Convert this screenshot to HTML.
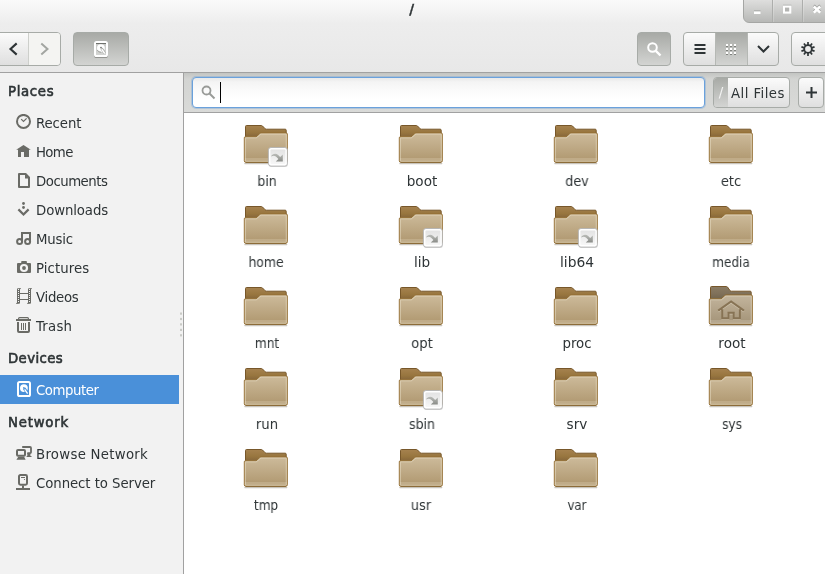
<!DOCTYPE html>
<html><head><meta charset="utf-8"><title>/</title>
<style>
*{box-sizing:border-box;margin:0;padding:0}
html,body{width:825px;height:574px;overflow:hidden;background:#ededed;font-family:"DejaVu Sans","Liberation Sans",sans-serif;font-size:13.3px;color:#2e3436}
#win{position:absolute;left:0;top:0;width:825px;height:574px;background:#ededed;overflow:hidden}
#titlebar{position:absolute;left:0;top:0;width:825px;height:24px;background:linear-gradient(#fafafa,#ededed)}
#title{position:absolute;left:0;width:823.6px;-webkit-text-stroke:.35px #2e3436;top:1px;text-align:center;font-weight:bold;font-size:13.3px;line-height:18px;color:#2e3436}
#wbtns{position:absolute;left:743px;top:-1px;width:90px;height:24px;border:1px solid #a5a6a4;border-bottom-left-radius:6px;background:linear-gradient(#dededd,#b7b8b6)}
#wbtns i{position:absolute;top:0;width:1px;height:22px;background:#adaeac;box-shadow:1px 0 0 rgba(255,255,255,.2)}
#toolbar{position:absolute;left:0;top:24px;width:825px;height:48px;background:linear-gradient(#ededed,#e8e8e8)}
#tbline{position:absolute;left:0;top:72px;width:825px;height:1px;background:#a1a1a1}
.btn{position:absolute;top:32px;height:34px;border:1px solid #a7aba7;border-radius:4px;background:linear-gradient(#fbfbfb,#dfdfdf)}
.btn.on{background:linear-gradient(#a8aaa6,#d3d4d2);border-color:#a7aba7}
#sidebar{position:absolute;left:0;top:73px;width:179px;height:501px;background:#f2f2f2}
#handle{position:absolute;left:179px;top:73px;width:4px;height:501px;background:#f2f2f2}
#handle i{position:absolute;left:1px;width:2px;height:2px;background:#cbccc8}
#sbline{position:absolute;left:183px;top:73px;width:1px;height:501px;background:#a1a1a1}
.hd{position:absolute;left:8px;font-weight:normal;-webkit-text-stroke:.6px #2e3436;font-size:13.3px;line-height:20px}
.it{position:absolute;left:36px;font-size:13.3px;line-height:20px}
.hd,.it,.af,.sl,#title,.l{will-change:transform}
.ic{position:absolute;left:16px;width:16px;height:16px}
#sel{position:absolute;left:0;top:302px;width:179px;height:29px;background:#4a90d9}
#search{position:absolute;left:184px;top:73px;width:641px;height:40px;background:linear-gradient(#c3c5c2,#d3d4d2 6px,#d9dad8);border-bottom:1px solid #a1a1a1}
#entry{position:absolute;left:8px;top:4px;width:513px;height:31px;border:1px solid #6aa1dc;border-radius:4px;background:linear-gradient(#e9e9e9,#f4f4f4 4px,#fafafa 12px,#fff 22px);box-shadow:0 0 0 1px rgba(74,144,217,.28)}
#view{position:absolute;left:184px;top:113px;width:641px;height:461px;background:#fff}
.f{position:absolute;width:48px;height:48px}
.l{position:absolute;width:120px;text-align:center;font-size:13.3px;line-height:18px}
.btn .dv{position:absolute;top:0;width:1px;height:32px;background:#b5b8b4}
.btn .mid{position:absolute;left:32px;top:0;width:31px;height:32px;background:linear-gradient(#a8aaa6,#d3d4d2)}
#cur{position:absolute;left:27px;top:4px;width:1px;height:21px;background:#000}
.sbtn{position:absolute;top:4px;height:31px;border:1px solid #a7aba7;border-radius:4px;background:linear-gradient(#fbfbfb,#dfdfdf);overflow:hidden}
.sbtn .sl{position:absolute;left:0;top:0;width:14px;height:29px;background:linear-gradient(#a8aaa6,#d3d4d2);color:#f4f4f4;font-weight:normal;font-size:13.3px;line-height:29px;text-align:center}
.sbtn .af{position:absolute;left:17px;top:1px;line-height:29px;font-size:13.3px;letter-spacing:.44px;white-space:nowrap}
</style></head><body>
<svg width="0" height="0" style="position:absolute"><defs>
<linearGradient id="gb" x1="0" y1="0" x2="0" y2="1"><stop offset="0" stop-color="#a6824f"/><stop offset="0.2" stop-color="#98763f"/><stop offset="0.33" stop-color="#86663a"/><stop offset="1" stop-color="#86663a"/></linearGradient>
<linearGradient id="gf" x1="0" y1="0" x2="0" y2="1"><stop offset="0" stop-color="#cdbb9b"/><stop offset="0.84" stop-color="#b39c75"/><stop offset="0.875" stop-color="#c2ae8b"/><stop offset="1" stop-color="#b9a480"/></linearGradient>
<linearGradient id="gbr" x1="0" y1="0" x2="0" y2="1"><stop offset="0" stop-color="#8b7b63"/><stop offset="0.2" stop-color="#80715a"/><stop offset="0.33" stop-color="#74664f"/><stop offset="1" stop-color="#74664f"/></linearGradient>
<linearGradient id="gfr" x1="0" y1="0" x2="0" y2="1"><stop offset="0" stop-color="#c3b59d"/><stop offset="0.84" stop-color="#a8987d"/><stop offset="0.875" stop-color="#b7a990"/><stop offset="1" stop-color="#ae9f85"/></linearGradient>
<linearGradient id="ge" x1="0" y1="0" x2="0" y2="1"><stop offset="0" stop-color="#e3e3e3"/><stop offset="1" stop-color="#f7f7f7"/></linearGradient>
<linearGradient id="ga" x1="0" y1="0" x2="0" y2="1"><stop offset="0" stop-color="#babcb8"/><stop offset="1" stop-color="#8a8c88"/></linearGradient>
<g id="fold">
<path d="M2.8 43.6 H44.8" stroke="#3a2a10" stroke-opacity=".28" stroke-width="1.2" stroke-linecap="round"/>
<path d="M3.5 40 V6.5 Q3.5 5.5 4.5 5.5 H19.3 Q20 5.5 20.5 6.0 L23 8.6 Q23.6 9.2 24.4 9.2 H43.2 Q44.2 9.2 44.2 10.2 V40 Z" fill="url(#gb)" stroke="#77572a" stroke-width="1"/>
<path d="M2.3 40.8 V17.8 Q2.3 16.8 3.3 16.8 H13.6 Q14.3 16.8 14.9 16.3 L17.7 13.5 Q18.2 13 19 13 H44.3 Q45.3 13 45.3 14 V40.8 Q45.3 42.3 43.8 42.3 H3.8 Q2.3 42.3 2.3 40.8 Z" fill="url(#gf)" stroke="#946f33" stroke-width="1"/><path d="M3.6 42.3 H44" stroke="#7e5d2b" stroke-width="1" stroke-opacity=".8"/>
<path d="M3.3 40.6 V18.3 Q3.3 17.8 3.8 17.8 H13.9 Q14.7 17.8 15.4 17.2 L18.2 14.4 Q18.6 14 19.3 14 H43.8 Q44.3 14 44.3 14.5 V40.6 Q44.3 41.3 43.6 41.3 H4 Q3.3 41.3 3.3 40.6 Z" fill="none" stroke="#f1e8d4" stroke-opacity=".6" stroke-width="0.9"/>
</g>
<g id="froot">
<path d="M2.8 43.6 H44.8" stroke="#3a2a10" stroke-opacity=".28" stroke-width="1.2" stroke-linecap="round"/>
<path d="M3.5 40 V5.5 Q3.5 4.5 4.5 4.5 H19.3 Q20 4.5 20.5 5.0 L23 8.6 Q23.6 9.2 24.4 9.2 H43.2 Q44.2 9.2 44.2 10.2 V40 Z" fill="url(#gbr)" stroke="#77572a" stroke-width="1"/>
<path d="M2.3 40.8 V17.8 Q2.3 16.8 3.3 16.8 H13.6 Q14.3 16.8 14.9 16.3 L17.7 13.5 Q18.2 13 19 13 H44.3 Q45.3 13 45.3 14 V40.8 Q45.3 42.3 43.8 42.3 H3.8 Q2.3 42.3 2.3 40.8 Z" fill="url(#gfr)" stroke="#906b2e" stroke-width="1"/><path d="M3.6 42.3 H44" stroke="#7e5d2b" stroke-width="1" stroke-opacity=".8"/>
<path d="M3.3 40.6 V18.3 Q3.3 17.8 3.8 17.8 H13.9 Q14.7 17.8 15.4 17.2 L18.2 14.4 Q18.6 14 19.3 14 H43.8 Q44.3 14 44.3 14.5 V40.6 Q44.3 41.3 43.6 41.3 H4 Q3.3 41.3 3.3 40.6 Z" fill="none" stroke="#e8dfcc" stroke-opacity=".6" stroke-width="0.9"/>
<path d="M11.2 29.6 L24.1 20.5 L37 29.6 M15.2 28.4 V37.3 H21.5 V31.7 H26.7 V37.3 H32.9 V28.4" fill="none" stroke="#d6cbb6" stroke-opacity=".75" stroke-width="1.6"/>
<path d="M11.2 28.6 L24.1 19.5 L37 28.6 M15.2 27.2 V36.3 H21.5 V30.7 H26.7 V36.3 H32.9 V27.2" fill="none" stroke="#877354" stroke-width="2"/>
</g>
<g id="link">
<rect x="26.8" y="28.4" width="19" height="18.7" rx="2.6" fill="#000" fill-opacity=".13"/>
<rect x="26.4" y="27.5" width="19" height="18.6" rx="2.6" fill="#fff" stroke="#b2b2b2" stroke-width="0.9"/>
<rect x="28.4" y="29.5" width="15" height="14.6" rx="1" fill="url(#ge)"/>
<path d="M29 36.4 C30.5 33.4 34 32.9 36.2 34.9 L38.2 37 L40.8 34.5 V41.5 H33.8 L36.4 38.9 L34.5 37 C32.8 35.3 30.8 35.4 29 36.4 Z" fill="url(#ga)"/>
</g>
</defs></svg>
<div id="win">
<div id="titlebar"><div id="title">/</div></div>
<div id="wbtns"><i style="left:28px"></i><i style="left:58px"></i>
<svg style="position:absolute;left:0;top:0" width="84" height="22" viewBox="0 0 84 22">
<rect x="10" y="10.5" width="6.5" height="1" fill="#9a9b99"/><rect x="10" y="11.4" width="6.5" height="2.6" fill="#fff"/>
<rect x="39" y="4.8" width="8.3" height="1" fill="#9a9b99"/><rect x="41" y="7.5" width="4.3" height="4" fill="#b3b4b2"/><rect x="40" y="6.5" width="6.3" height="6.1" fill="none" stroke="#fff" stroke-width="2"/>
<path d="M69.8 6.3 L76.2 12.7 M76.2 6.3 L69.8 12.7" stroke="#9a9b99" stroke-width="2.6" transform="translate(0,-0.8)"/>
<path d="M69.8 6.3 L76.2 12.7 M76.2 6.3 L69.8 12.7" stroke="#fff" stroke-width="2.6"/>
</svg></div>
<div id="toolbar"></div><div id="tbline"></div>
<div class="btn" style="left:-10px;width:71px"><b style="position:absolute;left:38px;top:0;width:31px;height:32px;background:#f4f4f2;border-radius:0 3px 3px 0"></b><i class="dv" style="left:37px;background:#cdcfcb"></i>
<svg style="position:absolute;left:10px;top:0" width="60" height="32" viewBox="0 0 60 32"><path d="M15.7 10.4 L9.5 16 L15.7 21.6" fill="none" stroke="#2e3436" stroke-width="2.1"/><path d="M40.3 10.4 L46.5 16 L40.3 21.6" fill="none" stroke="#a2a5a1" stroke-width="2"/></svg></div>
<div class="btn on" style="left:73px;width:56px">
<svg style="position:absolute;left:19px;top:8px;overflow:visible" width="16" height="17" viewBox="0 0 16 17"><rect x="2" y="2" width="12" height="14" rx="1.6" fill="none" stroke="#7d7f7b" stroke-width="2" opacity=".7"/><rect x="2" y="1" width="12" height="14" rx="1.6" fill="#fff" fill-opacity=".25" stroke="#fff" stroke-width="2"/><rect x="3" y="2" width="10" height="1" fill="#6f716d"/><circle cx="7.9" cy="7.1" r="3.9" fill="#fff"/><path d="M4.3 9 A3.9 3.9 0 0 0 8.2 11.2" fill="none" stroke="#7c7e7a" stroke-width="0.7"/><circle cx="8" cy="6.6" r="0.85" fill="#6b6d69"/><path d="M8.6 7.4 L11.7 12.3" stroke="#a3a5a1" stroke-width="2.6"/><path d="M9.1 8.6 L11.4 12" stroke="#fff" stroke-width="1.5" stroke-linecap="round"/></svg></div>
<div class="btn on" style="left:637px;width:34px">
<svg style="position:absolute;left:8px;top:8px" width="16" height="16" viewBox="0 0 16 16"><circle cx="6.5" cy="6.5" r="4.3" fill="none" stroke="#fff" stroke-width="2"/><path d="M9.8 9.8 L14.5 14.5" stroke="#fff" stroke-width="2.4"/></svg></div>
<div class="btn" style="left:683px;width:96px"><b class="mid"></b><i class="dv" style="left:31px"></i><i class="dv" style="left:63px"></i>
<svg style="position:absolute;left:0;top:0" width="94" height="32" viewBox="0 0 94 32">
<path d="M10.5 12 H21.5 M10.5 16 H21.5 M10.5 20 H21.5" stroke="#2e3436" stroke-width="2"/>
<g fill="#7f817d"><rect x="42" y="13" width="2" height="1"/><rect x="46" y="13" width="2" height="1"/><rect x="50" y="13" width="2" height="1"/><rect x="42" y="17" width="2" height="1"/><rect x="46" y="17" width="2" height="1"/><rect x="50" y="17" width="2" height="1"/><rect x="42" y="21" width="2" height="1"/><rect x="46" y="21" width="2" height="1"/><rect x="50" y="21" width="2" height="1"/></g><g fill="#fff"><rect x="42" y="11" width="2" height="2"/><rect x="46" y="11" width="2" height="2"/><rect x="50" y="11" width="2" height="2"/><rect x="42" y="15" width="2" height="2"/><rect x="46" y="15" width="2" height="2"/><rect x="50" y="15" width="2" height="2"/><rect x="42" y="19" width="2" height="2"/><rect x="46" y="19" width="2" height="2"/><rect x="50" y="19" width="2" height="2"/></g>
<path d="M74 13 L79.5 18.5 L85 13" fill="none" stroke="#2e3436" stroke-width="2"/>
</svg></div>
<div class="btn" style="left:791px;width:40px">
<svg style="position:absolute;left:8px;top:8px;overflow:visible" width="16" height="16" viewBox="0 0 16 16"><g stroke="#2e3436" stroke-width="1.7"><path d="M8.00 1.10 L8.00 14.90"/><path d="M12.06 2.42 L3.94 13.58"/><path d="M14.56 5.87 L1.44 10.13"/><path d="M14.56 10.13 L1.44 5.87"/><path d="M12.06 13.58 L3.94 2.42"/></g><circle cx="8" cy="8" r="4.7" fill="#2e3436"/><circle cx="8" cy="8" r="2.9" fill="#ececec"/></svg></div>
<div id="sidebar">
<div class="hd" style="top:9px;letter-spacing:0.66px">Places</div>
<div class="hd" style="top:276px;letter-spacing:0.37px">Devices</div>
<div class="hd" style="top:340px;letter-spacing:0.78px">Network</div>
<div id="sel"></div>
<svg class="ic" style="top:41px" viewBox="0 0 16 16"><circle cx="7.5" cy="7.4" r="6.5" fill="none" stroke="#6a6b66" stroke-width="2"/><path d="M5.2 5.2 L7.5 7.5 L10.6 4.4" fill="none" stroke="#6a6b66" stroke-width="1.2"/></svg>
<div class="it" style="top:41px;letter-spacing:-0.1px">Recent</div>
<svg class="ic" style="top:70px" viewBox="0 0 16 16"><path d="M7.5 2 L0.2 6.8 H2 V14 H5 V9 H8 V14 H13 V6.8 H14.8 Z" fill="#6a6b66"/></svg>
<div class="it" style="top:70px;letter-spacing:-0.63px">Home</div>
<svg class="ic" style="top:99px" viewBox="0 0 16 16"><path d="M3 2 H9.6 L13 5.4 V15 H3 Z" fill="none" stroke="#6a6b66" stroke-width="2" stroke-linejoin="round"/><path d="M9 2 V6.5 H13 Z" fill="#6a6b66"/></svg>
<div class="it" style="top:99px;letter-spacing:-0.49px">Documents</div>
<svg class="ic" style="top:128px" viewBox="0 0 16 16"><circle cx="7.5" cy="2.5" r="1.4" fill="#6a6b66"/><circle cx="7.5" cy="6.5" r="1.4" fill="#6a6b66"/><path d="M2.4 8.4 L7.5 13.5 L12.6 8.4" stroke="#6a6b66" stroke-width="2.2" fill="none"/></svg>
<div class="it" style="top:128px;letter-spacing:-0.11px">Downloads</div>
<svg class="ic" style="top:157px" viewBox="0 0 16 16"><path d="M6 12 V3 H14 V12" fill="none" stroke="#6a6b66" stroke-width="2"/><circle cx="3.6" cy="11.6" r="2.5" fill="none" stroke="#6a6b66" stroke-width="2"/><circle cx="11.6" cy="11.6" r="2.5" fill="none" stroke="#6a6b66" stroke-width="2"/></svg>
<div class="it" style="top:157px;letter-spacing:-0.22px">Music</div>
<svg class="ic" style="top:186px" viewBox="0 0 16 16"><path d="M1 5 Q1 4 2 4 H5.2 V2.7 Q5.2 2 6 2 H10.1 Q10.9 2 10.9 2.7 V4 H14 Q15 4 15 5 V13 Q15 14 14 14 H2 Q1 14 1 13 Z" fill="#6a6b66"/><circle cx="8" cy="9" r="4.1" fill="#f4f4f4"/><circle cx="8" cy="9" r="1.9" fill="#6a6b66"/></svg>
<div class="it" style="top:186px;letter-spacing:0.07px">Pictures</div>
<svg class="ic" style="top:215px" viewBox="0 0 16 16"><rect x="1" y="0.2" width="3" height="15.6" rx="1" fill="#6a6b66"/><rect x="12" y="0.2" width="3" height="15.6" rx="1" fill="#6a6b66"/><path d="M2.5 1 V15 M13.5 1 V15" stroke="#f2f2f2" stroke-width="1" stroke-dasharray="1 1"/><path d="M4 5.5 H12 M4 11.5 H12" stroke="#6a6b66" stroke-width="1.1"/><path d="M3 0.6 H5 M14 0.6 H16 M0 15.4 H2 M11 15.4 H13" stroke="#6a6b66" stroke-width="0.8"/></svg>
<div class="it" style="top:215px;letter-spacing:-0.3px">Videos</div>
<svg class="ic" style="top:244px" viewBox="0 0 16 16"><path d="M0 3 H15" stroke="#6a6b66" stroke-width="2"/><path d="M2.6 2.4 V1.5 Q2.6 0.6 3.5 0.6 H11.5 Q12.4 0.6 12.4 1.5 V2.4" fill="none" stroke="#6a6b66" stroke-width="1.2"/><path d="M2 5 V14 Q2 15 3 15 H12 Q13 15 13 14 V5" fill="none" stroke="#6a6b66" stroke-width="2"/><path d="M5.5 6 V13 M7.5 6 V13 M9.5 6 V13" stroke="#6a6b66" stroke-width="1"/></svg>
<div class="it" style="top:244px;letter-spacing:0.2px;left:36.4px">Trash</div>
<svg class="ic" style="top:308px" viewBox="0 0 16 16"><rect x="2" y="1" width="12" height="14" rx="1.6" fill="none" stroke="#ffffff" stroke-width="2"/><circle cx="7.9" cy="7.1" r="3.9" fill="#ffffff"/><circle cx="7.9" cy="6.9" r="0.9" fill="#4a90d9"/><path d="M8.2 7.4 L11.6 12.4" stroke="#4a90d9" stroke-width="2.8"/><path d="M9 8.8 L11.3 12.1" stroke="#ffffff" stroke-width="1.4" stroke-linecap="round"/></svg>
<div class="it" style="top:308px;letter-spacing:-0.46px;color:#fff">Computer</div>
<svg class="ic" style="top:372px" viewBox="0 0 16 16"><rect x="1" y="5" width="8" height="5.7" rx="1" fill="none" stroke="#6a6b66" stroke-width="2"/><path d="M2.3 11.7 H8.1 L9.6 14.8 H0.4 Z" fill="#6a6b66"/><path d="M6.2 2 H14 Q15 2 15 3 V7.3 Q15 8.2 14 8.2 H11.3" fill="none" stroke="#6a6b66" stroke-width="1.8"/><path d="M11.3 8 H14.4 V11 H15.5 V12 H10.6 V11 H11.3 Z" fill="#6a6b66"/></svg>
<div class="it" style="top:372px;letter-spacing:0.28px">Browse Network</div>
<svg class="ic" style="top:401px" viewBox="0 0 16 16"><rect x="3" y="1" width="8" height="9.7" rx="1.4" fill="none" stroke="#6a6b66" stroke-width="2"/><path d="M5 3.5 H9" stroke="#6a6b66" stroke-width="1"/><circle cx="8.5" cy="5.5" r="0.6" fill="#6a6b66"/><path d="M7 11.5 V14" stroke="#6a6b66" stroke-width="2"/><path d="M0 15 H14" stroke="#6a6b66" stroke-width="2"/></svg>
<div class="it" style="top:401px;letter-spacing:-0.07px">Connect to Server</div>
</div>
<div id="handle"><svg width="4" height="501" style="position:absolute;left:0;top:0"><rect x="1" y="239.5" width="2" height="2.2" fill="#c9cac6"/><rect x="1" y="244.9" width="2" height="2.2" fill="#c9cac6"/><rect x="1" y="250.3" width="2" height="2.2" fill="#c9cac6"/><rect x="1" y="255.8" width="2" height="2.2" fill="#c9cac6"/><rect x="1" y="261.2" width="2" height="2.2" fill="#c9cac6"/></svg></div><div id="sbline"></div>
<div id="search"><div id="entry"><svg style="position:absolute;left:6px;top:5px" width="18" height="18" viewBox="0 0 18 18"><circle cx="7.5" cy="7.5" r="4" fill="none" stroke="#999b98" stroke-width="1.8"/><path d="M10.5 10.5 L15.5 15.5" stroke="#999b98" stroke-width="2"/></svg><i id="cur"></i></div>
<div class="sbtn" style="left:529px;width:77px"><b class="sl">/</b><span class="af">All Files</span></div>
<div class="sbtn" style="left:614px;width:26px"><svg style="position:absolute;left:7px;top:9px" width="11" height="11" viewBox="0 0 11 11"><path d="M5.5 0 V11 M0 5.5 H11" stroke="#2e3436" stroke-width="2"/></svg></div>
</div>
<div id="view">
<svg class="f" style="left:58px;top:7px" viewBox="0 0 48 48"><use href="#fold"/><use href="#link"/></svg>
<div class="l" style="left:22.5px;top:60px;transform:scaleX(0.945)">bin</div>
<svg class="f" style="left:213px;top:7px" viewBox="0 0 48 48"><use href="#fold"/></svg>
<div class="l" style="left:178.0px;top:60px;transform:scaleX(1.021)">boot</div>
<svg class="f" style="left:368px;top:7px" viewBox="0 0 48 48"><use href="#fold"/></svg>
<div class="l" style="left:332.5px;top:60px;transform:scaleX(0.958)">dev</div>
<svg class="f" style="left:523px;top:7px" viewBox="0 0 48 48"><use href="#fold"/></svg>
<div class="l" style="left:487.3px;top:60px;transform:scaleX(0.985)">etc</div>
<svg class="f" style="left:58px;top:88px" viewBox="0 0 48 48"><use href="#fold"/></svg>
<div class="l" style="left:22.3px;top:141px;transform:scaleX(0.932)">home</div>
<svg class="f" style="left:213px;top:88px" viewBox="0 0 48 48"><use href="#fold"/><use href="#link"/></svg>
<div class="l" style="left:178.2px;top:141px;transform:scaleX(1.02)">lib</div>
<svg class="f" style="left:368px;top:88px" viewBox="0 0 48 48"><use href="#fold"/><use href="#link"/></svg>
<div class="l" style="left:333.0px;top:141px;transform:scaleX(1.038)">lib64</div>
<svg class="f" style="left:523px;top:88px" viewBox="0 0 48 48"><use href="#fold"/></svg>
<div class="l" style="left:487.3px;top:141px;transform:scaleX(0.912)">media</div>
<svg class="f" style="left:58px;top:169px" viewBox="0 0 48 48"><use href="#fold"/></svg>
<div class="l" style="left:22.6px;top:222px;transform:scaleX(0.919)">mnt</div>
<svg class="f" style="left:213px;top:169px" viewBox="0 0 48 48"><use href="#fold"/></svg>
<div class="l" style="left:178.2px;top:222px;transform:scaleX(0.977)">opt</div>
<svg class="f" style="left:368px;top:169px" viewBox="0 0 48 48"><use href="#fold"/></svg>
<div class="l" style="left:332.5px;top:222px;transform:scaleX(1.004)">proc</div>
<svg class="f" style="left:523px;top:169px" viewBox="0 0 48 48"><use href="#froot"/></svg>
<div class="l" style="left:488.0px;top:222px;transform:scaleX(1.022)">root</div>
<svg class="f" style="left:58px;top:250px" viewBox="0 0 48 48"><use href="#fold"/></svg>
<div class="l" style="left:23.1px;top:303px;transform:scaleX(0.991)">run</div>
<svg class="f" style="left:213px;top:250px" viewBox="0 0 48 48"><use href="#fold"/><use href="#link"/></svg>
<div class="l" style="left:178.2px;top:303px;transform:scaleX(0.944)">sbin</div>
<svg class="f" style="left:368px;top:250px" viewBox="0 0 48 48"><use href="#fold"/></svg>
<div class="l" style="left:333.2px;top:303px;transform:scaleX(1.025)">srv</div>
<svg class="f" style="left:523px;top:250px" viewBox="0 0 48 48"><use href="#fold"/></svg>
<div class="l" style="left:487.6px;top:303px;transform:scaleX(0.918)">sys</div>
<svg class="f" style="left:58px;top:331px" viewBox="0 0 48 48"><use href="#fold"/></svg>
<div class="l" style="left:22.4px;top:384px;transform:scaleX(0.911)">tmp</div>
<svg class="f" style="left:213px;top:331px" viewBox="0 0 48 48"><use href="#fold"/></svg>
<div class="l" style="left:177.3px;top:384px;transform:scaleX(0.962)">usr</div>
<svg class="f" style="left:368px;top:331px" viewBox="0 0 48 48"><use href="#fold"/></svg>
<div class="l" style="left:332.6px;top:384px;transform:scaleX(0.882)">var</div>
</div>
</div>
</body></html>
